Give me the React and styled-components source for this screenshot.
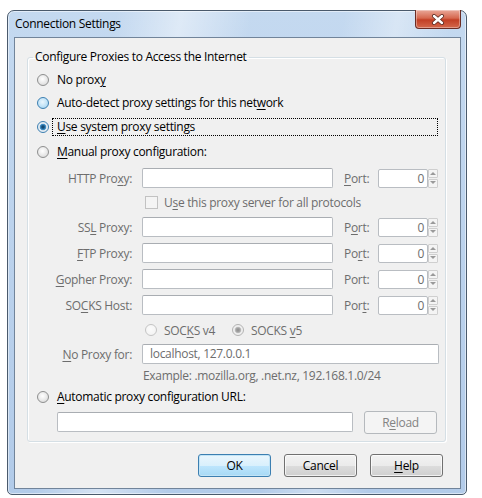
import React from "react";
import styled, { createGlobalStyle } from "styled-components";

const GlobalStyle = createGlobalStyle`
  html, body {
    margin: 0;
    padding: 0;
    background: #fff;
  }
  body {
    font-family: "Open Sans", "Noto Sans", sans-serif;
    font-size: 12px;
    letter-spacing: -0.3px;
    color: #000;
  }
`;

const Window = styled.div`
  box-sizing: border-box;
  width: 460px;
  height: 485px;
  margin: 10px 0 0 7px;
  border: 1px solid #4a5a6c;
  border-radius: 7px 7px 5px 5px;
  padding: 0 5px 5px 6px;
  display: flex;
  flex-direction: column;
  background: linear-gradient(
      100deg,
      rgba(255, 255, 255, 0) 20%,
      rgba(255, 255, 255, 0.45) 32%,
      rgba(255, 255, 255, 0) 45%,
      rgba(255, 255, 255, 0) 62%,
      rgba(255, 255, 255, 0.35) 72%,
      rgba(255, 255, 255, 0) 82%
    ),
    linear-gradient(#c4d9f0, #b2cbe9);
  box-shadow: inset 0 0 0 1px rgba(255, 255, 255, 0.5);
`;

const TitleBar = styled.div`
  height: 26px;
  display: flex;
  justify-content: space-between;
  align-items: flex-start;
`;

const Title = styled.span`
  line-height: 26px;
  padding-left: 1px;
  color: #000;
`;

const CloseButton = styled.div`
  box-sizing: border-box;
  width: 46px;
  height: 19px;
  margin-top: -1px;
  border: 1px solid #6b2c24;
  border-top: none;
  border-radius: 0 0 4px 4px;
  display: flex;
  align-items: center;
  justify-content: center;
  background: linear-gradient(#e9a899, #d6684f 45%, #c23f25 55%, #d4684c);
  box-shadow: inset 0 0 0 1px rgba(255, 255, 255, 0.35);
`;

const Client = styled.div`
  flex: 1;
  border: 1px solid #71849a;
  background: #f0f0f0;
  padding: 11px 14px 0 12px;
  display: flex;
  flex-direction: column;
`;

const Group = styled.fieldset`
  margin: 0;
  min-width: 0;
  border: 1px solid #d5dfe5;
  border-radius: 3px;
  padding: 4px 7px 6px 9px;
  box-shadow: inset 1px 1px 0 #fff, 1px 1px 0 #fff;
`;

const Legend = styled.legend`
  margin-left: -4px;
  padding: 0 2px;
  line-height: 16px;
`;

const RadioRow = styled.div`
  height: ${(p) => p.$h}px;
  display: flex;
  align-items: center;
`;

const RadioLabel = styled.span`
  flex: 1;
  margin-left: 3px;
  padding: 0 0 0 4px;
  line-height: 16px;
  border: 1px dotted ${(p) => (p.$focus ? "#000" : "transparent")};
  color: ${(p) => (p.$disabled ? "#6d6d6d" : "#000")};
`;

const radioBg = {
  normal:
    "radial-gradient(circle at 45% 40%, #ffffff 0, #ececec 45%, #d2d2d2 100%)",
  hover:
    "radial-gradient(circle at 45% 40%, #eaf6fd 0, #bfe2f7 55%, #9fcdea 100%)",
  checked:
    "radial-gradient(circle, #0f3a5c 0, #1f5f8e 1.6px, #4d9bd2 3px, #dfe9f1 3.6px, #f6f6f6 100%)",
  disabled: "radial-gradient(circle at 45% 40%, #fbfbfb 0, #f1f1f1 100%)",
  disabledChecked:
    "radial-gradient(circle, #8d8d8d 0, #a3a3a3 2px, #c4c4c4 3px, #ededed 3.6px, #f7f7f7 100%)",
};

const radioBorder = {
  normal: "#8e8f8f",
  hover: "#3c7fb1",
  checked: "#3c7fb1",
  disabled: "#c4c4c4",
  disabledChecked: "#b3b3b3",
};

const Radio = styled.span`
  box-sizing: border-box;
  flex: none;
  width: 12px;
  height: 12px;
  border-radius: 50%;
  border: 1px solid ${(p) => radioBorder[p.$state]};
  background: ${(p) => radioBg[p.$state]};
`;

const Check = styled.span`
  box-sizing: border-box;
  flex: none;
  width: 13px;
  height: 13px;
  border: 1px solid #c2c2c2;
  background: #f4f4f4;
`;

const Key = styled.u`
  text-decoration-thickness: 1px;
  text-underline-offset: 2px;
`;

const Manual = styled.div`
  display: flex;
  flex-direction: column;
`;

const FieldRow = styled.div`
  height: ${(p) => p.$h}px;
  display: grid;
  grid-template-columns: 105px 202px 34px 60px;
  align-items: center;
`;

const FieldLabel = styled.span`
  text-align: right;
  padding-right: 10px;
  color: #6d6d6d;
  white-space: nowrap;
`;

const PortLabel = styled.span`
  color: #6d6d6d;
`;

const TextBox = styled.div`
  box-sizing: border-box;
  width: ${(p) => p.$w}px;
  height: 20px;
  border: 1px solid #b9bdc2;
  border-top-color: #a9adb2;
  border-radius: 2px;
  background: #fff;
  padding: 0 7px;
  line-height: 18px;
  color: #6d6d6d;
  white-space: nowrap;
`;

const PortField = styled.div`
  display: flex;
  height: 19px;
`;

const PortInput = styled.div`
  box-sizing: border-box;
  width: 50px;
  height: 19px;
  border: 1px solid #b9bdc2;
  border-radius: 2px;
  background: #fff;
  text-align: right;
  padding-right: 3px;
  line-height: 17px;
  color: #6d6d6d;
`;

const Spinner = styled.div`
  width: 10px;
  display: flex;
  flex-direction: column;
  gap: 1px;
`;

const SpinHalf = styled.div`
  box-sizing: border-box;
  flex: 1;
  border: 1px solid #cfcfcf;
  border-radius: 1px;
  background: #f4f4f4;
  display: flex;
  align-items: center;
  justify-content: center;
`;

const OptionCell = styled.div`
  grid-column: 2 / -1;
  display: flex;
  align-items: center;
  padding-left: 3px;
  color: #6d6d6d;
`;

const OptionText = styled.span`
  margin-left: ${(p) => p.$gap}px;
  margin-right: ${(p) => p.$after || 0}px;
`;

const WideCell = styled.div`
  grid-column: 2 / -1;
`;

const Hint = styled.div`
  grid-column: 2 / -1;
  padding-left: 1px;
  color: #6d6d6d;
`;

const UrlRow = styled.div`
  height: 26px;
  display: flex;
  align-items: center;
  padding-left: 20px;
  gap: 11px;
`;

const Button = styled.div`
  box-sizing: border-box;
  width: 73px;
  height: 23px;
  border: 1px solid ${(p) => (p.$disabled ? "#b5b9bd" : p.$default ? "#3c7fb1" : "#707070")};
  border-radius: 3px;
  display: flex;
  align-items: center;
  justify-content: center;
  color: ${(p) => (p.$disabled ? "#838383" : "#000")};
  background: ${(p) =>
    p.$disabled
      ? "#f4f4f4"
      : p.$default
      ? "linear-gradient(#eaf6fd 0, #d9f0fc 50%, #bee6fd 50%, #a7d9f5 100%)"
      : "linear-gradient(#f2f2f2 0, #ebebeb 50%, #dddddd 50%, #cfcfcf 100%)"};
  box-shadow: ${(p) =>
    p.$disabled
      ? "none"
      : p.$default
      ? "inset 0 0 0 1px #c2e4f6"
      : "inset 0 0 0 1px rgba(255,255,255,0.7)"};
`;

const ButtonBar = styled.div`
  margin: 12px 3px 0 0;
  display: flex;
  justify-content: flex-end;
  gap: 13px;
`;

function Arrow({ up }) {
  return (
    <svg width="6" height="4" viewBox="0 0 6 4">
      <path d={up ? "M0 4 L3 1 L6 4 Z" : "M0 0 L3 3 L6 0 Z"} fill="#9a9a9a" />
    </svg>
  );
}

function Port() {
  return (
    <PortField>
      <PortInput>0</PortInput>
      <Spinner>
        <SpinHalf>
          <Arrow up />
        </SpinHalf>
        <SpinHalf>
          <Arrow />
        </SpinHalf>
      </Spinner>
    </PortField>
  );
}

function ProxyRow({ label, port }) {
  return (
    <FieldRow $h={26}>
      <FieldLabel>{label}</FieldLabel>
      <TextBox $w={191} />
      <PortLabel>{port}</PortLabel>
      <Port />
    </FieldRow>
  );
}

function CloseGlyph() {
  return (
    <svg width="14" height="11" viewBox="0 0 14 11">
      <path
        d="M3 2 L11 9 M11 2 L3 9"
        stroke="#5a2a22"
        strokeWidth="4"
        strokeLinecap="round"
      />
      <path
        d="M3 2 L11 9 M11 2 L3 9"
        stroke="#fff"
        strokeWidth="2.4"
        strokeLinecap="round"
      />
    </svg>
  );
}

export default function App() {
  return (
    <>
      <GlobalStyle />
      <Window>
        <TitleBar>
          <Title>Connection Settings</Title>
          <CloseButton>
            <CloseGlyph />
          </CloseButton>
        </TitleBar>
        <Client>
          <Group>
            <Legend>Configure Proxies to Access the Internet</Legend>
            <RadioRow $h={22}>
              <Radio $state="normal" />
              <RadioLabel>
                No prox<Key>y</Key>
              </RadioLabel>
            </RadioRow>
            <RadioRow $h={24}>
              <Radio $state="hover" />
              <RadioLabel>
                Auto-detect proxy settings for this net<Key>w</Key>ork
              </RadioLabel>
            </RadioRow>
            <RadioRow $h={24}>
              <Radio $state="checked" />
              <RadioLabel $focus>
                <Key>U</Key>se system proxy settings
              </RadioLabel>
            </RadioRow>
            <RadioRow $h={26}>
              <Radio $state="normal" />
              <RadioLabel>
                <Key>M</Key>anual proxy configuration:
              </RadioLabel>
            </RadioRow>

            <Manual>
              <ProxyRow
                label={
                  <>
                    HTTP Pro<Key>x</Key>y:
                  </>
                }
                port={
                  <>
                    <Key>P</Key>ort:
                  </>
                }
              />
              <FieldRow $h={23}>
                <span />
                <OptionCell>
                  <Check />
                  <OptionText $gap={6}>
                    U<Key>s</Key>e this proxy server for all protocols
                  </OptionText>
                </OptionCell>
              </FieldRow>
              <ProxyRow
                label={
                  <>
                    SS<Key>L</Key> Proxy:
                  </>
                }
                port={
                  <>
                    P<Key>o</Key>rt:
                  </>
                }
              />
              <ProxyRow
                label={
                  <>
                    <Key>F</Key>TP Proxy:
                  </>
                }
                port={
                  <>
                    Po<Key>r</Key>t:
                  </>
                }
              />
              <ProxyRow
                label={
                  <>
                    <Key>G</Key>opher Proxy:
                  </>
                }
                port="Port:"
              />
              <ProxyRow
                label={
                  <>
                    SO<Key>C</Key>KS Host:
                  </>
                }
                port={
                  <>
                    Por<Key>t</Key>:
                  </>
                }
              />
              <FieldRow $h={24}>
                <span />
                <OptionCell>
                  <Radio $state="disabled" />
                  <OptionText $gap={7} $after={17}>
                    SOC<Key>K</Key>S v4
                  </OptionText>
                  <Radio $state="disabledChecked" />
                  <OptionText $gap={7}>
                    SOCKS <Key>v</Key>5
                  </OptionText>
                </OptionCell>
              </FieldRow>
              <FieldRow $h={24}>
                <FieldLabel>
                  <Key>N</Key>o Proxy for:
                </FieldLabel>
                <WideCell>
                  <TextBox $w={297}>localhost, 127.0.0.1</TextBox>
                </WideCell>
              </FieldRow>
              <FieldRow $h={18}>
                <span />
                <Hint>Example: .mozilla.org, .net.nz, 192.168.1.0/24</Hint>
              </FieldRow>
            </Manual>

            <RadioRow $h={25}>
              <Radio $state="normal" />
              <RadioLabel>
                <Key>A</Key>utomatic proxy configuration URL:
              </RadioLabel>
            </RadioRow>
            <UrlRow>
              <TextBox $w={296} />
              <Button $disabled>
                R<Key>e</Key>load
              </Button>
            </UrlRow>
          </Group>

          <ButtonBar>
            <Button $default>OK</Button>
            <Button>Cancel</Button>
            <Button>
              <Key>H</Key>elp
            </Button>
          </ButtonBar>
        </Client>
      </Window>
    </>
  );
}
